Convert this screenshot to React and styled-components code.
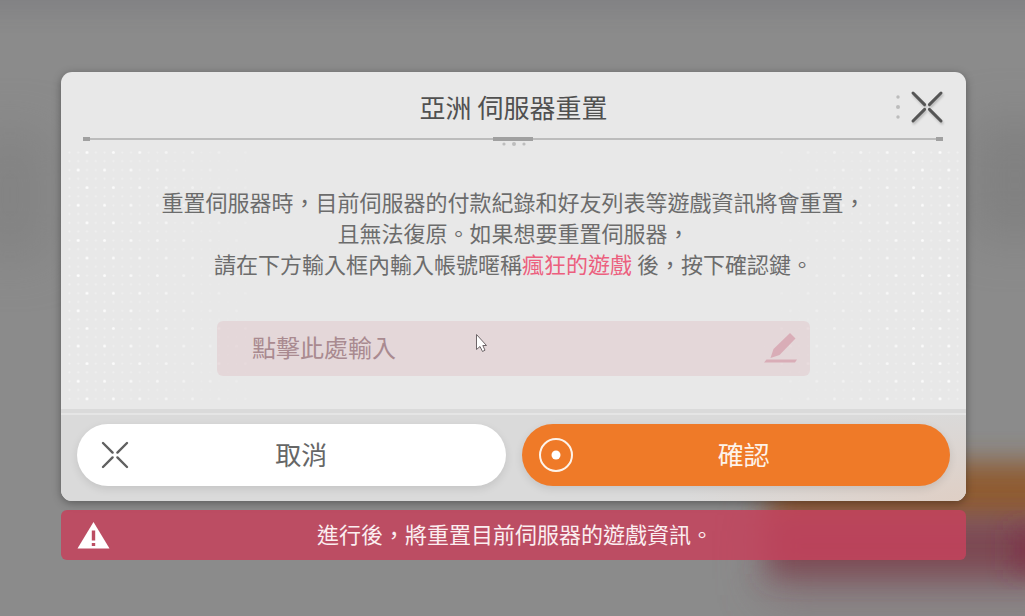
import React from "react";
import styled, { createGlobalStyle } from "styled-components";

const GlobalStyle = createGlobalStyle`
  * {
    box-sizing: border-box;
  }

  body {
    margin: 0;
    background: #8b8b8b;
    font-family: "Noto Sans CJK TC", sans-serif;
  }

  button, input {
    font-family: inherit;
  }
`;

const Screen = styled.main`
  position: relative;
  min-height: 100vh;
  padding: 72px 59px 56px 61px;
  overflow: hidden;
`;

const Scenery = styled.svg`
  position: absolute;
  inset: 0;
  width: 100%;
  height: 100%;
`;

const Dialog = styled.section`
  position: relative;
  display: flex;
  flex-direction: column;
  border-radius: 11px;
  background: #e8e8e8;
  box-shadow: 0 2px 8px rgba(0, 0, 0, 0.35);
  overflow: hidden;
`;

const Header = styled.header`
  display: grid;
  grid-template-columns: 1fr auto 1fr;
  align-items: center;
  height: 66px;
  padding: 4px 22px 0;
`;

const Title = styled.h1`
  grid-column: 2;
  margin: 0;
  font-size: 26px;
  font-weight: 400;
  line-height: 38px;
  color: #505050;
`;

const HeaderTools = styled.div`
  display: flex;
  align-items: center;
  justify-content: flex-end;
  gap: 10px;
`;

const CloseButton = styled.button`
  display: flex;
  padding: 0;
  border: none;
  background: none;
  cursor: pointer;

  svg {
    filter: drop-shadow(1px 2px 1px rgba(0, 0, 0, 0.2));
  }
`;

const Divider = styled.div`
  display: flex;
  align-items: center;
  justify-content: space-between;
  height: 2px;
  margin: 0 23px 0 22px;
  background: #bcbcbc;
`;

const DividerMark = styled.span`
  width: ${(props) => (props.$wide ? "40px" : "7px")};
  height: 4px;
  background: #a0a0a0;
`;

const CenterDots = styled.div`
  display: flex;
  justify-content: center;
  height: 8px;
`;

const Content = styled.div`
  position: relative;
  padding: 38px 0 33px;
`;

const Dots = styled.svg`
  position: absolute;
  top: 0;
  ${(props) => (props.$right ? "right: 4px;" : "left: 4px;")}
`;

const Message = styled.p`
  position: relative;
  margin: 0;
  text-align: center;
  font-size: 22px;
  line-height: 31px;
  color: #6c6c6c;

  strong {
    font-weight: 400;
    color: #ec5f7e;
  }
`;

const Field = styled.label`
  position: relative;
  display: flex;
  align-items: center;
  height: 55px;
  margin: 42px 156px 0;
  padding: 0 12px 0 35px;
  border-radius: 6px;
  background: rgba(214, 148, 162, 0.2);
`;

const NameInput = styled.input`
  flex: 1;
  min-width: 0;
  height: 100%;
  padding: 0 0 4px;
  border: none;
  outline: none;
  background: none;
  font-size: 24px;
  color: #8c6a70;

  &::placeholder {
    color: #a98a90;
    opacity: 1;
  }
`;

const Pointer = styled.svg`
  position: absolute;
  top: 12px;
  left: 258px;
`;

const Footer = styled.footer`
  display: grid;
  grid-template-columns: 1fr 1fr;
  gap: 16px;
  padding: 9px 16px 15px;
  border-top: 2px solid #e5e5e5;
  background: radial-gradient(ellipse 280px 90px at 100% 100%, #dfcfc5, rgba(218, 218, 218, 0)), #dadada;
`;

const Seam = styled.div`
  height: 4px;
  background: #dadada;
`;

const Action = styled.button`
  display: flex;
  align-items: center;
  height: 62px;
  padding: 0 36px 0 ${(props) => (props.$primary ? "16px" : "20px")};
  border: none;
  border-radius: 31px;
  background: ${(props) => (props.$primary ? "#ef7a28" : "#fff")};
  box-shadow: 0 3px 8px rgba(0, 0, 0, 0.1);
  font-size: 26px;
  line-height: 38px;
  color: ${(props) => (props.$primary ? "#fdf3ea" : "#666")};
  cursor: pointer;

  span {
    flex: 1;
    padding-bottom: 2px;
  }
`;

const Warning = styled.div`
  position: relative;
  display: flex;
  align-items: center;
  height: 50px;
  margin-top: 9px;
  padding: 0 16px;
  border-radius: 6px;
  background: rgba(196, 66, 92, 0.86);
  font-size: 22px;
  line-height: 31px;
  color: #fbeef0;

  p {
    flex: 1;
    margin: 0;
    padding: 0 30px 4px 0;
    text-align: center;
  }
`;

function Cross({ size, box, color, width }) {
  return (
    <svg width={box} height={box} viewBox={`${-box / 2} ${-box / 2} ${box} ${box}`} aria-hidden="true">
      <path
        d={[[-1, -1], [1, -1], [1, 1], [-1, 1]]
          .map(([x, y]) => `M${x * 2.4} ${y * 2.4}L${x * size} ${y * size}`)
          .join("")}
        stroke={color}
        strokeWidth={width}
        strokeLinecap="round"
      />
    </svg>
  );
}

function DotTexture({ right }) {
  const name = right ? "right" : "left";
  return (
    <Dots $right={right} width="230" height="260" aria-hidden="true">
      <defs>
        <pattern id={`dots-${name}`} width="26.4" height="35.2" patternUnits="userSpaceOnUse">
          {[0, 1, 2, 3].map((row) =>
            [0, 1, 2].map((col) => {
              const bright = (row === 0 && col === 2) || (row === 2 && col === 1);
              return (
                <circle
                  key={`${row}-${col}`}
                  cx={4.4 + col * 8.8}
                  cy={4.4 + row * 8.8}
                  r={bright ? 1.5 : 1.1}
                  fill="#fff"
                  opacity={bright ? 0.95 : 0.4}
                />
              );
            })
          )}
        </pattern>
        <linearGradient id={`fade-${name}`}>
          <stop offset="0" stopColor="#fff" />
          <stop offset="0.35" stopColor="#fff" stopOpacity="0.7" />
          <stop offset="0.9" stopColor="#fff" stopOpacity="0" />
        </linearGradient>
        <mask id={`mask-${name}`}>
          <rect width="230" height="260" fill={`url(#fade-${name})`} />
        </mask>
      </defs>
      <g transform={right ? "translate(230 0) scale(-1 1)" : undefined}>
        <g mask={`url(#mask-${name})`}>
          <rect width="230" height="255.2" fill={`url(#dots-${name})`} />
        </g>
      </g>
    </Dots>
  );
}

function Backdrop() {
  return (
    <Scenery viewBox="0 0 1025 616" preserveAspectRatio="xMidYMid slice" aria-hidden="true">
      <defs>
        <filter id="haze" x="-50%" y="-50%" width="200%" height="200%">
          <feGaussianBlur stdDeviation="14" />
        </filter>
        <filter id="wideHaze" x="-50%" y="-50%" width="200%" height="200%">
          <feGaussianBlur stdDeviation="24" />
        </filter>
      </defs>
      <rect width="1025" height="616" fill="#8b8b8b" />
      <rect x="-40" y="-30" width="1110" height="42" fill="#77777b" opacity="0.5" filter="url(#haze)" />
      <rect x="-30" y="130" width="80" height="130" fill="#7c7c7c" opacity="0.5" filter="url(#wideHaze)" />
      <rect x="970" y="120" width="90" height="120" fill="#777" opacity="0.5" filter="url(#wideHaze)" />
      <rect x="765" y="515" width="310" height="80" fill="#7f6068" opacity="0.7" filter="url(#wideHaze)" />
      <rect x="770" y="462" width="300" height="62" fill="#8f5b32" filter="url(#haze)" />
      <rect x="770" y="518" width="300" height="56" fill="#7d4852" filter="url(#haze)" />
      <rect x="1015" y="530" width="60" height="40" fill="#7b3247" filter="url(#haze)" />
    </Scenery>
  );
}

export default function App() {
  return (
    <>
      <GlobalStyle />
      <Screen>
        <Backdrop />
        <Dialog role="dialog" aria-labelledby="reset-title">
          <Header>
            <Title id="reset-title">亞洲 伺服器重置</Title>
            <HeaderTools>
              <svg width="4" height="24" viewBox="0 0 4 24" fill="#bcbcbc" aria-hidden="true">
                <circle cx="2" cy="2" r="1.7" />
                <circle cx="2" cy="12" r="2" />
                <circle cx="2" cy="22" r="1.7" />
              </svg>
              <CloseButton aria-label="關閉">
                <Cross size={14} box={34} color="#555" width={3} />
              </CloseButton>
            </HeaderTools>
          </Header>
          <Divider>
            <DividerMark />
            <DividerMark $wide />
            <DividerMark />
          </Divider>
          <CenterDots>
            <svg width="24" height="8" viewBox="0 0 24 8" fill="#bdbdbd" aria-hidden="true">
              <circle cx="2" cy="4" r="1.6" />
              <circle cx="12" cy="4" r="2" />
              <circle cx="22" cy="4" r="1.6" />
            </svg>
          </CenterDots>

          <Content>
            <DotTexture />
            <DotTexture right />
            <Message>
              重置伺服器時，目前伺服器的付款紀錄和好友列表等遊戲資訊將會重置，
              <br />
              且無法復原。如果想要重置伺服器，
              <br />
              請在下方輸入框內輸入帳號暱稱<strong>瘋狂的遊戲</strong> 後，按下確認鍵。
            </Message>
            <Field>
              <NameInput type="text" aria-label="帳號暱稱" placeholder="點擊此處輸入" />
              <svg width="34" height="32" viewBox="0 0 34 32" fill="#d9adb7" aria-hidden="true">
                <path d="M26 0L31.500 5.500L15.500 22L6.500 25L9.500 16Z" />
                <path d="M2.500 26.500H33L31 29.500H0Z" />
              </svg>
              <Pointer width="14" height="20" viewBox="0 0 14 20" aria-hidden="true">
                <path
                  d="M1.500 1.500V16.500L5 13.500L7.500 18.500L10 17.200L7.800 12.500H11.500Z"
                  fill="#fff"
                  stroke="#6d6568"
                  strokeLinejoin="round"
                />
              </Pointer>
            </Field>
          </Content>

          <Seam />
          <Footer>
            <Action type="button">
              <Cross size={12} box={36} color="#606060" width={2.4} />
              <span>取消</span>
            </Action>
            <Action type="button" $primary>
              <svg width="36" height="36" viewBox="0 0 36 36" aria-hidden="true">
                <circle cx="18" cy="18" r="16" fill="none" stroke="#fdf3ea" strokeWidth="2" />
                <circle cx="18" cy="18" r="4.500" fill="#fff" />
              </svg>
              <span>確認</span>
            </Action>
          </Footer>
        </Dialog>

        <Warning role="alert">
          <svg width="33" height="28" viewBox="0 0 33 28" aria-hidden="true">
            <path d="M16.500 1L32.500 27.500H0.500Z" fill="#fff" />
            <path d="M14.800 9.500H18.200V19.500H14.800ZM14.800 22H18.200V25H14.800Z" fill="#bc4d62" />
          </svg>
          <p>進行後，將重置目前伺服器的遊戲資訊。</p>
        </Warning>
      </Screen>
    </>
  );
}
